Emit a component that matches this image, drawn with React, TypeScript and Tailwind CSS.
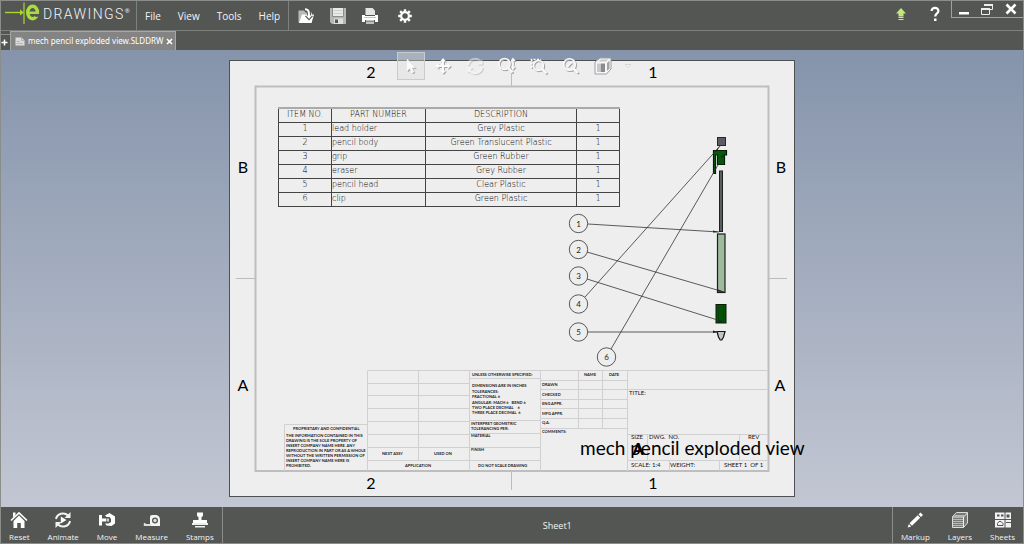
import React from "react";

type IconProps = { className?: string };

const menus = ["File", "View", "Tools", "Help"];

const parts = [
  { item: 1, name: "lead holder", description: "Grey Plastic", qty: 1 },
  { item: 2, name: "pencil body", description: "Green Translucent Plastic", qty: 1 },
  { item: 3, name: "grip", description: "Green Rubber", qty: 1 },
  { item: 4, name: "eraser", description: "Grey Rubber", qty: 1 },
  { item: 5, name: "pencil head", description: "Clear Plastic", qty: 1 },
  { item: 6, name: "clip", description: "Green Plastic", qty: 1 },
];

const balloons = [
  { n: 1, x: 578.5, y: 223.5, from: [588, 224], to: [719, 232] },
  { n: 2, x: 578.5, y: 249.5, from: [587, 252], to: [724, 292] },
  { n: 3, x: 578.5, y: 276, from: [587, 279], to: [724, 322] },
  { n: 4, x: 578.5, y: 304, from: [585, 297], to: [721, 145] },
  { n: 5, x: 578.5, y: 332, from: [588, 332], to: [718, 332] },
  { n: 6, x: 606.5, y: 357, from: [611, 349], to: [725, 153] },
];

/* Logo and file icons */

function LogoMark() {
  return (
    <svg viewBox="0 0 36 24" className="h-6 w-9" aria-hidden="true">
      <path d="M1 10.500H17" stroke="#a9d62f" strokeWidth="1.400" />
      <path d="M16 7.500L20 10.500L16 13.500Z" fill="#a9d62f" />
      <path d="M20 0.500V22" stroke="#a9d62f" strokeWidth="1.200" />
      <ellipse cx="28.600" cy="10.500" rx="4.900" ry="6.200" fill="none" stroke="#a9dc3c" strokeWidth="3.400" />
      <path d="M30 12H36V14.800H31Z" fill="#545654" />
      <path d="M25 9.500H35V12H25Z" fill="#a9dc3c" />
    </svg>
  );
}

function OpenIcon() {
  return (
    <svg viewBox="0 0 18 18" className="size-[18px]" aria-hidden="true">
      <path d="M1.500 3.500H7L8.500 5.500H15V15.500H1.500Z" fill="#b9bab9" />
      <path d="M5 7.500H17L14.500 16H2Z" fill="#fff" />
      <path d="M8 2C12 2 12 5 12 9" stroke="#545654" strokeWidth="4" fill="none" />
      <path d="M8 2.200C12 2.200 12 5 12 10" stroke="#fff" strokeWidth="2" fill="none" />
      <path d="M8.500 8.800L12 12.700L15.500 8.800" stroke="#545654" strokeWidth="1.200" fill="none" />
      <path d="M9.500 8.500H14.500L12 11.500Z" fill="#fff" />
    </svg>
  );
}

function SaveIcon() {
  return (
    <svg viewBox="0 0 18 18" className="size-[18px]" aria-hidden="true">
      <path d="M1 1H17V17H3L1 15Z" fill="#b5b6b5" />
      <path d="M4 1H14V9H4Z" fill="#e9e9e9" />
      <path d="M4.500 3.500H13.500M4.500 6.500H13.500" stroke="#cfcfcf" />
      <path d="M3.500 1V9.500H14.500V1" stroke="#8c8e8c" fill="none" />
      <path d="M5 11.500H14V17H5Z" fill="#dedede" />
      <path d="M6 12.500H9V16H6Z" fill="#545654" />
    </svg>
  );
}

function PrintIcon() {
  return (
    <svg viewBox="0 0 18 18" className="size-[18px]" aria-hidden="true">
      <path d="M4.500 1H11.500L14 3.500V8H4.500Z" fill="#e4e4e4" />
      <path d="M1 8H4V9H14V8H17V15H14V13H4V15H1Z" fill="#fff" />
      <path d="M3 10.500H15" stroke="#c2c3c2" />
      <path d="M5 13H13V17H5Z" fill="#bfc0bf" />
      <path d="M5 14.500H13" stroke="#8a8b8a" />
    </svg>
  );
}

function GearIcon() {
  return (
    <svg viewBox="0 0 16 16" className="size-4" aria-hidden="true">
      <circle cx="8" cy="8" r="3.900" fill="none" stroke="#fff" strokeWidth="2.200" />
      <path
        d="M8 1.200V3.500M8 12.500V14.800M1.200 8H3.500M12.500 8H14.800M3.200 3.200L5 5M11 11L12.800 12.800M12.800 3.200L11 5M5 11L3.200 12.800"
        stroke="#fff"
        strokeWidth="2.400"
      />
    </svg>
  );
}

function UpdateIcon() {
  return (
    <svg viewBox="0 0 12 14" className="h-[14px] w-3" aria-hidden="true">
      <path d="M6 1L11 6.500H8.500V9.500H3.500V6.500H1Z" fill="#c5e67c" />
      <path d="M3.500 10.500H8.500M3.500 12.500H8.500" stroke="#d5d8d0" strokeWidth="1.200" />
    </svg>
  );
}

function HelpIcon() {
  return (
    <svg viewBox="0 0 12 16" className="h-4 w-3" aria-hidden="true">
      <path d="M2.600 5C2.600 0.800 9.400 0.800 9.400 5C9.400 7.500 6.200 7.300 6.200 10.600" fill="none" stroke="#fff" strokeWidth="2.200" />
      <path d="M5 12.500H7.500V15H5Z" fill="#fff" />
    </svg>
  );
}

function DocumentIcon() {
  return (
    <svg viewBox="0 0 10 9" className="h-[9px] w-[10px]" aria-hidden="true">
      <path d="M0.500 0.500H6.500L9.500 3.500V8.500H0.500Z" fill="#dcdcdc" />
      <path d="M6.500 0.500V3.500H9.500" stroke="#aaa" strokeWidth="0.800" fill="none" />
      <path d="M1.500 4.500H5M1.500 6.500H8" stroke="#b5b5b5" />
    </svg>
  );
}

/* Icons of the floating view toolbar: a light glyph over its soft shadow */

function ViewGlyph({ children, faded }: { children: React.ReactNode; faded?: boolean }) {
  return (
    <svg viewBox="0 0 20 20" className="size-5" fill="none" aria-hidden="true" opacity={faded ? 0.45 : 1}>
      <g transform="translate(1 1)" stroke="#a2a4a6" fill="#a2a4a6">
        {children}
      </g>
      <g stroke="#fafafa" fill="#fafafa">
        {children}
      </g>
    </svg>
  );
}

const viewTools = [
  {
    label: "Select",
    glyph: <path d="M6 3L6 15L9 12.500L11 17L13 16L11 11.800H14.500Z" strokeWidth="0.300" />,
  },
  {
    label: "Pan",
    glyph: (
      <>
        <path d="M10 4V16M4 10H16" strokeWidth="2" fill="none" />
        <path d="M10 2L13 5.500H7ZM10 18L7 14.500H13ZM2 10L5.500 7V13ZM18 10L14.500 13V7Z" stroke="none" />
      </>
    ),
  },
  {
    label: "Rotate",
    faded: true,
    glyph: (
      <>
        <path d="M3 9A7 7 0 0 1 16 6.500M17 11A7 7 0 0 1 4 13.500" strokeWidth="2.200" fill="none" />
        <path d="M17.500 3V8.500H12ZM2.500 17V11.500H8Z" stroke="none" />
      </>
    ),
  },
  {
    label: "Zoom",
    glyph: (
      <>
        <circle cx="7.500" cy="8" r="5.500" strokeWidth="1.500" fill="none" />
        <path d="M11.500 12.500L15.500 16.500" strokeWidth="2.400" />
        <path d="M16 4V12" strokeWidth="1.500" />
        <path d="M16 1.500L18.500 5H13.500ZM16 14L13.500 10.500H18.500Z" stroke="none" />
      </>
    ),
  },
  {
    label: "Zoom to area",
    glyph: (
      <>
        <path d="M2.500 12V3.500H12" strokeWidth="1.600" strokeDasharray="2 1.500" fill="none" />
        <circle cx="9.500" cy="9.500" r="5" strokeWidth="1.500" fill="none" />
        <path d="M13.200 13.200L17.500 17.500" strokeWidth="2.400" />
      </>
    ),
  },
  {
    label: "Zoom to fit",
    glyph: (
      <>
        <circle cx="8.500" cy="8.500" r="5.800" strokeWidth="1.500" fill="none" />
        <path d="M6.500 10.500L10.500 6.500" strokeWidth="1.600" />
        <path d="M12.800 12.800L17 17" strokeWidth="2.400" />
      </>
    ),
  },
];

function CubeIcon() {
  return (
    <svg viewBox="0 0 20 20" className="size-5" aria-hidden="true">
      <path d="M2 6L7 2H18V13L13.500 18H2Z" fill="#f7f7f7" stroke="#9c9ea1" />
      <path d="M4 7.500H7V16H4Z" fill="#c9c9cb" />
      <path d="M7.500 7.500H12V16H7.500Z" fill="#8a8c90" />
      <path d="M14 7L16.500 4.500V12.500L14 15Z" fill="#a2a4a7" />
      <path d="M5 5.500L8 3.500H15.500L13 5.500Z" fill="#c6c7ca" />
    </svg>
  );
}

/* Icons of the bottom bar */

const footerIcon = "size-[18px]";

function ResetIcon() {
  return (
    <svg viewBox="0 0 18 18" className={footerIcon} aria-hidden="true">
      <path d="M1 9.500L9 1.800L17 9.500" fill="none" stroke="#fff" strokeWidth="1.600" />
      <path d="M3 1.500H5.500V4L3 6.500Z" fill="#fff" />
      <path d="M3.500 10L9 4.600L14.500 10V17H10.800V12H7.200V17H3.500Z" fill="#fff" />
    </svg>
  );
}

function AnimateIcon() {
  return (
    <svg viewBox="0 0 18 18" className={footerIcon} aria-hidden="true">
      <path d="M2 8A7 6.500 0 0 1 14 4.500M16 10A7 6.500 0 0 1 4 13.500" fill="none" stroke="#f2f2f2" strokeWidth="2" />
      <path d="M16.500 1V7H10.500ZM1.500 17V11H7.500Z" fill="#f2f2f2" />
      <path d="M6.800 5.500L12.500 9L6.800 12.500Z" fill="#fff" />
    </svg>
  );
}

function MoveIcon() {
  return (
    <svg viewBox="0 0 18 18" className={footerIcon} aria-hidden="true">
      <path d="M1 4H4V7.500H8V10.500H4V14.500H1Z" fill="#fff" />
      <path d="M7 4.500L11.500 2L17 5.500V12.500L13.500 15L8.500 14.500L7 12.500H10.500L13 11V8L11.500 6H8.500Z" fill="#fff" />
      <path d="M8.500 7.500H11V10.500H8.500Z" fill="#cfd0cf" />
    </svg>
  );
}

function MeasureIcon() {
  return (
    <svg viewBox="0 0 18 18" className={footerIcon} aria-hidden="true">
      <path d="M7 6Q7 4 9 4H13.500Q17 5 17 9V15H7Z" fill="#f5f5f5" />
      <circle cx="12" cy="9.500" r="3" fill="#545654" />
      <circle cx="12" cy="9.500" r="1.700" fill="#ddd" />
      <path d="M1 14H8M1.700 12V15" stroke="#ddd" strokeWidth="1.800" />
    </svg>
  );
}

function StampIcon() {
  return (
    <svg viewBox="0 0 18 18" className={footerIcon} aria-hidden="true">
      <path d="M6 1.500H12V5L10.500 6V9H16V13H2V9H7.500V6L6 5Z" fill="#fff" />
      <path d="M1 12H17V14H1ZM4 15H14V16.500H4Z" fill="#ededed" />
    </svg>
  );
}

function MarkupIcon() {
  return (
    <svg viewBox="0 0 18 18" className={footerIcon} aria-hidden="true">
      <path d="M12.500 3.500L14.500 1.500L17 4L15 6ZM11.700 4.300L14.200 6.800L6 14.700L3.500 12.200ZM2.800 13L5.200 15.400L1.700 16.500Z" fill="#fff" />
    </svg>
  );
}

function LayersIcon() {
  return (
    <svg viewBox="0 0 18 18" className={footerIcon} aria-hidden="true">
      <path d="M1.500 5.500L5.500 1.500H16.500V12L12.500 16.500H1.500Z" fill="#777977" stroke="#dcdcdc" />
      <path d="M2 6H12.500V16.500M12.500 6L16.500 2" stroke="#eee" fill="none" />
      <path d="M2 8.500H12M2 10.500H12M2 12.500H12M2 14.500H12M3.500 4.500H13" stroke="#b8bab8" />
    </svg>
  );
}

function SheetsIcon() {
  return (
    <svg viewBox="0 0 18 18" className={footerIcon} aria-hidden="true">
      <path d="M1 1.500H17V16.500H1Z" fill="#f2f2f2" />
      <path d="M3 3.500H5.500V5.500H3ZM7 3.500H9.500V5.500H7ZM12.500 3.500H15.500V6.500H12.500Z" fill="#545654" />
      <path d="M1 8.500H17M11 1V17M12 11.500H17" stroke="#545654" />
      <path d="M3.500 14.500V12.500L5 10.500H7L9 12.500V14.500Z" fill="none" stroke="#545654" />
    </svg>
  );
}

const leftActions = [
  { label: "Reset", Icon: ResetIcon },
  { label: "Animate", Icon: AnimateIcon },
  { label: "Move", Icon: MoveIcon },
  { label: "Measure", Icon: MeasureIcon },
  { label: "Stamps", Icon: StampIcon },
];

const rightActions = [
  { label: "Markup", Icon: MarkupIcon },
  { label: "Layers", Icon: LayersIcon },
  { label: "Sheets", Icon: SheetsIcon },
];

function Action({ label, Icon }: { label: string; Icon: React.ComponentType<IconProps> }) {
  return (
    <button type="button" className="flex flex-col items-center gap-[2px] text-[8px] leading-3 text-gray-100">
      <Icon />
      {label}
    </button>
  );
}

/* The sheet: border, zones, title block, exploded parts and balloons */

const smallNotes: [number, number, string][] = [
  [472, 376, "UNLESS OTHERWISE SPECIFIED:"],
  [472, 387, "DIMENSIONS ARE IN INCHES"],
  [472, 393, "TOLERANCES:"],
  [472, 398, "FRACTIONAL ±"],
  [472, 404, "ANGULAR: MACH ±   BEND ±"],
  [472, 409, "TWO PLACE DECIMAL    ±"],
  [472, 414, "THREE PLACE DECIMAL  ±"],
  [471, 425, "INTERPRET GEOMETRIC"],
  [471, 430, "TOLERANCING PER:"],
  [471, 437, "MATERIAL"],
  [471, 451, "FINISH"],
  [478, 467, "DO NOT SCALE DRAWING"],
  [382, 455, "NEXT ASSY"],
  [434, 455, "USED ON"],
  [405, 467, "APPLICATION"],
  [584, 376, "NAME"],
  [609, 376, "DATE"],
  [542, 386, "DRAWN"],
  [542, 396, "CHECKED"],
  [542, 405, "ENG APPR."],
  [542, 415, "MFG APPR."],
  [542, 424, "Q.A."],
  [542, 433, "COMMENTS:"],
  [293, 430, "PROPRIETARY AND CONFIDENTIAL"],
  [286, 437, "THE INFORMATION CONTAINED IN THIS"],
  [286, 442, "DRAWING IS THE SOLE PROPERTY OF"],
  [286, 447, "INSERT COMPANY NAME HERE. ANY"],
  [286, 452, "REPRODUCTION IN PART OR AS A WHOLE"],
  [286, 457, "WITHOUT THE WRITTEN PERMISSION OF"],
  [286, 462, "INSERT COMPANY NAME HERE IS"],
  [286, 467, "PROHIBITED."],
];

const titleLabels: [number, number, string][] = [
  [629, 395, "TITLE:"],
  [631, 439, "SIZE"],
  [649, 439, "DWG.  NO."],
  [748, 439, "REV"],
  [631, 467, "SCALE: 1:4"],
  [670, 467, "WEIGHT:"],
  [724, 467, "SHEET 1  OF 1"],
];

const zones: [number, number, string][] = [
  [371, 78, "2"],
  [653, 78, "1"],
  [371, 489, "2"],
  [653, 489, "1"],
  [243, 173, "B"],
  [781, 173, "B"],
  [243, 391, "A"],
  [780, 391, "A"],
];

function SheetDrawing() {
  return (
    <svg
      viewBox="229 60 566 437"
      className="block h-[437px] w-[566px] overflow-visible font-['Lato',sans-serif]"
      role="img"
      aria-label="Exploded view of a mechanical pencil"
    >
      <rect x="229.500" y="60.500" width="565" height="436" fill="#eeeeee" stroke="#4d5152" />
      <rect x="255.500" y="86.500" width="513" height="384.500" fill="none" stroke="#bebebe" strokeWidth="2" />
      <path d="M511.500 66V86M511.500 472V490M236 278.500H255M769 278.500H787" stroke="#bcbcbc" fill="none" />

      <path
        d="M284.500 471V424.500H367M367.500 471V370.500H768M367.500 383.500H469.500M367.500 395.500H469.500M367.500 408.500H469.500M367.500 421.500H469.500M367.500 434.500H469.500M367.500 447.500H469.500M367.500 460.500H540M418.500 370V460M469.500 370V471M540.500 370V471M469.500 378.500H540M469.500 420.500H540M469.500 433.500H540M469.500 447.500H540M578.500 370V428M602.500 370V428M627.500 370V471M540 380.500H627M540 389.500H627M540 399.500H627M540 408.500H627M540 418.500H627M540 428.500H627M627 389.500H768M627 434.500H768M627 460.500H768M647.500 434V460M739.500 434V460M669.500 460V471M719.500 460V471"
        stroke="#d0d0d0"
        fill="none"
      />

      <g fill="#000" fontSize="16" textAnchor="middle">
        {zones.map(([x, y, text]) => (
          <text key={`${x}-${y}`} x={x} y={y}>
            {text}
          </text>
        ))}
      </g>
      <g fill="#222" fontSize="4" fontWeight="700">
        {smallNotes.map(([x, y, text]) => (
          <text key={`${x}-${y}`} x={x} y={y} className="whitespace-pre">
            {text}
          </text>
        ))}
      </g>
      <g fill="#111" fontSize="6">
        {titleLabels.map(([x, y, text]) => (
          <text key={`${x}-${y}`} x={x} y={y} className="whitespace-pre">
            {text}
          </text>
        ))}
      </g>
      <text x="638" y="455" fontSize="16" fontWeight="900" textAnchor="middle">
        A
      </text>
      <text x="580" y="455" fontSize="19" fill="#000">
        mech pencil exploded view
      </text>

      <rect x="717.500" y="137.500" width="8" height="8" fill="#5c5d63" stroke="#26272a" />
      <path d="M713.500 151V173.500H715.500V155H717.500V164.500H724.500V155H726.500V150.500H713.500Z" fill="#045a0a" stroke="#031f05" strokeWidth="1.200" />
      <rect x="719.500" y="171" width="3" height="60.500" fill="#5a5e5e" stroke="#1f2121" />
      <rect x="717.500" y="234" width="7.500" height="58.500" fill="#9fb99f" stroke="#172017" strokeWidth="1.200" />
      <rect x="716" y="304.500" width="10" height="18.500" fill="#045206" stroke="#0c1b0c" />
      <path d="M718.500 306V322M723.500 306V322" stroke="#063f08" />
      <path d="M717 331.500H725L723.500 337L721.800 340H720.200L718.500 337Z" fill="#c4c4c4" stroke="#111" strokeWidth="1.200" />
      <path d="M720 145.500L714 152.500L717 151ZM719 232L713 230.500V232.500ZM724 292L718 289.500V291.500ZM724 322L718 319.500V321.500ZM718 332L713 330.500V333ZM725 153L721 157L722 158Z" fill="#111" />

      {balloons.map((b) => (
        <g key={b.n}>
          <line x1={b.from[0]} y1={b.from[1]} x2={b.to[0]} y2={b.to[1]} stroke="#333" strokeWidth="0.800" />
          <circle cx={b.x} cy={b.y} r="9.200" fill="#eeeeee" stroke="#333" strokeWidth="0.800" />
          <text x={b.x} y={b.y + 3} fontSize="8" textAnchor="middle" fill="#222">
            {b.n}
          </text>
        </g>
      ))}
    </svg>
  );
}

function PartsTable() {
  return (
    <table className="table-fixed border-collapse border border-[#444] text-center font-['DejaVu_Sans',sans-serif] text-[8px] leading-[10px] font-extralight text-black">
      <colgroup>
        <col className="w-[53px]" />
        <col className="w-[94px]" />
        <col className="w-[151px]" />
        <col className="w-[43px]" />
      </colgroup>
      <thead>
        <tr className="h-[14px] border-t-2 border-t-[#aaa]">
          <th className="border-x border-b border-[#444] p-0 font-extralight">ITEM NO.</th>
          <th className="border-x border-b border-[#444] p-0 font-extralight">PART NUMBER</th>
          <th className="border-x border-b border-[#444] p-0 font-extralight">DESCRIPTION</th>
          <th className="border-x border-b border-[#444] p-0" aria-label="Quantity" />
        </tr>
      </thead>
      <tbody>
        {parts.map((p) => (
          <tr key={p.item} className="h-[14px]">
            <td className="border border-[#444] p-0">{p.item}</td>
            <td className="border border-[#444] p-0 text-left">{p.name}</td>
            <td className="border border-[#444] p-0">{p.description}</td>
            <td className="border border-[#444] p-0">{p.qty}</td>
          </tr>
        ))}
      </tbody>
    </table>
  );
}

export default function App() {
  return (
    <div className="flex min-h-screen flex-col border border-[#8a8d8a] bg-[#545654] font-['Open_Sans','Noto_Sans',sans-serif] text-gray-100">
      <header className="flex h-[30px] items-stretch border-b border-[#7d807d]">
        <div className="flex w-[136px] items-center border-r border-[#7d807d] pb-1 pl-[3px]">
          <LogoMark />
          <span className="pl-[3px] font-['Roboto',sans-serif] text-[14px] leading-4 font-light tracking-widest text-gray-100">
            DRAWINGS
          </span>
          <span className="self-start pt-1 text-[6px] leading-3">®</span>
        </div>
        <nav className="flex items-center gap-[17px] border-r border-[#7d807d] px-2">
          {menus.map((m) => (
            <button key={m} type="button" className="text-[10px] leading-4">
              {m}
            </button>
          ))}
        </nav>
        <div className="flex items-center gap-[14px] pl-2">
          <button type="button" aria-label="Open"><OpenIcon /></button>
          <button type="button" aria-label="Save"><SaveIcon /></button>
          <button type="button" aria-label="Print"><PrintIcon /></button>
          <button type="button" aria-label="Options" className="pl-1"><GearIcon /></button>
        </div>
        <div className="ml-auto flex items-center gap-[22px] pr-[10px] pb-1">
          <button type="button" aria-label="Updates"><UpdateIcon /></button>
          <button type="button" aria-label="Help"><HelpIcon /></button>
        </div>
        <div className="flex h-[17px] w-[72px] items-center justify-around border-b border-l border-[#a0a2a0]">
          <button type="button" aria-label="Minimize">
            <svg viewBox="0 0 12 12" className="size-3" aria-hidden="true">
              <path d="M1 9H11V11.500H1Z" fill="#fff" />
            </svg>
          </button>
          <button type="button" aria-label="Restore">
            <svg viewBox="0 0 12 12" className="size-3" fill="none" aria-hidden="true">
              <path d="M3.500 3V1.500H11.500V6.500H9" stroke="#eee" />
              <path d="M3 2H12M0 6H9" stroke="#eee" strokeWidth="2" />
              <path d="M0.500 6V11.500H8.500V6" stroke="#eee" />
            </svg>
          </button>
          <button type="button" aria-label="Close">
            <svg viewBox="0 0 12 12" className="size-3" aria-hidden="true">
              <path d="M1.500 1.500L10.500 10.500M10.500 1.500L1.500 10.500" stroke="#fff" strokeWidth="2.600" />
            </svg>
          </button>
        </div>
      </header>

      <div className="flex h-[19px] items-end">
        <button type="button" aria-label="New tab" className="flex h-4 w-[9px] items-center border-t border-[#8a8d8a]">
          <svg viewBox="0 0 7 7" className="size-[7px]" aria-hidden="true">
            <path d="M3.500 0.500V6.500M0.500 3.500H6.500" stroke="#fff" strokeWidth="1.500" />
          </svg>
        </button>
        <div className="flex h-[19px] items-center gap-[3px] border border-b-0 border-[#a6a6a6] bg-[#848484] pr-[2px] pl-1">
          <DocumentIcon />
          <span className="font-['Noto_Sans',sans-serif] text-[8px] leading-3 text-white">mech pencil exploded view.SLDDRW</span>
          <button type="button" aria-label="Close tab">
            <svg viewBox="0 0 7 7" className="size-[7px]" aria-hidden="true">
              <path d="M1 1L6 6M6 1L1 6" stroke="#fff" strokeWidth="1.600" />
            </svg>
          </button>
        </div>
      </div>

      <main className="relative flex flex-1 items-center justify-center bg-linear-to-b from-[#8594ab] to-[#c3c7d3]">
        <div className="relative">
          <SheetDrawing />
          <div className="absolute top-[47px] left-[49px]">
            <PartsTable />
          </div>
        </div>
        <div className="absolute inset-x-0 top-[2px] flex items-center justify-center gap-1 pl-2" role="toolbar" aria-label="View">
          {viewTools.map((t, i) => (
            <button
              key={t.label}
              type="button"
              aria-label={t.label}
              className={
                i === 0
                  ? "flex size-7 items-center justify-center border border-[#c9cbcd] bg-[#dcdcdc]/40"
                  : "flex size-7 items-center justify-center"
              }
            >
              <ViewGlyph faded={t.faded}>{t.glyph}</ViewGlyph>
            </button>
          ))}
          <button type="button" aria-label="View orientation" className="flex size-7 items-center justify-center">
            <CubeIcon />
          </button>
          <button type="button" aria-label="More orientations" className="px-1">
            <svg viewBox="0 0 6 4" className="h-1 w-[6px]" aria-hidden="true">
              <path d="M0.500 0.500H5.500L3 3.500Z" fill="#fff" stroke="#b5b5b5" strokeWidth="0.500" />
            </svg>
          </button>
        </div>
      </main>

      <footer className="flex h-9 items-stretch">
        <div className="flex items-end gap-[18px] border-r border-[#8a8d8a] px-2">
          {leftActions.map((a) => (
            <Action key={a.label} {...a} />
          ))}
        </div>
        <div className="flex flex-1 items-center justify-center pt-[2px] text-[9px] leading-3">Sheet1</div>
        <div className="flex items-end gap-[18px] border-l border-[#8a8d8a] px-2">
          {rightActions.map((a) => (
            <Action key={a.label} {...a} />
          ))}
        </div>
      </footer>
    </div>
  );
}
